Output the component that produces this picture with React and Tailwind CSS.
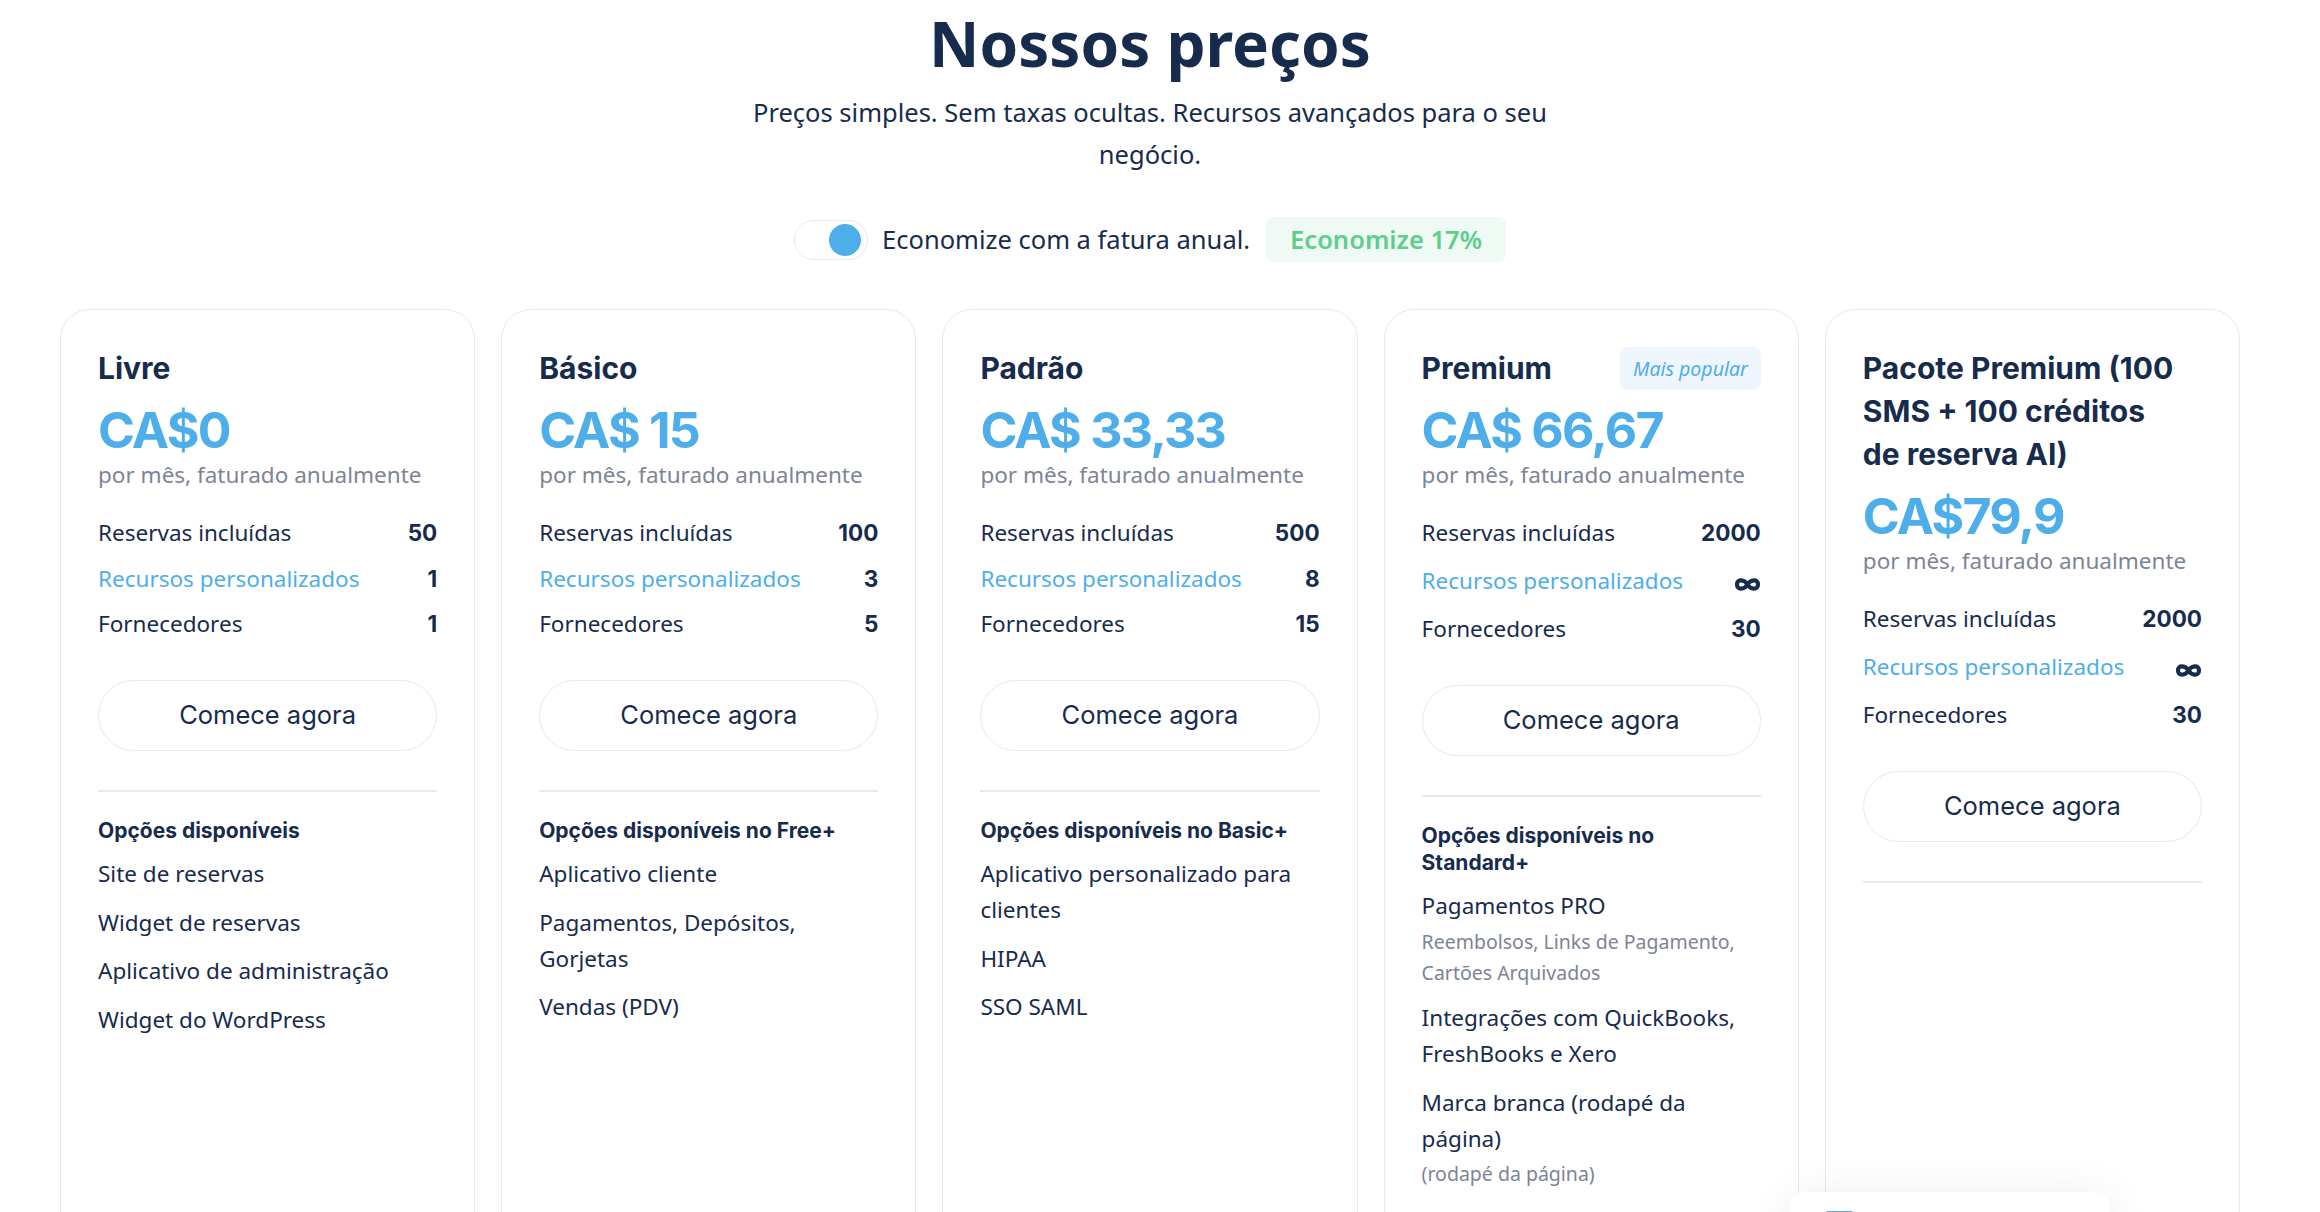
import React from "react";

const NAVY = "text-[#172b4d]";

function Infinity() {
  return (
    <svg width="27" height="17" viewBox="0 0 27 17" className="mt-[6px] block">
      <path
        d="M13.5 8.5 C10.5 3.5 3 2.5 3 8.5 C3 14.5 10.5 13.5 13.5 8.5 C16.5 3.5 24 2.5 24 8.5 C24 14.5 16.5 13.5 13.5 8.5 Z"
        fill="none"
        stroke="#172b4d"
        strokeWidth="4.2"
        strokeLinejoin="round"
      />
    </svg>
  );
}

function Row({ label, value, link }) {
  const inf = value === "inf";
  return (
    <div className={`flex items-center justify-between ${inf ? "h-[39px]" : "h-[34px]"}`}>
      <span
        className={`text-[22.5px] leading-[34px] ${link ? "text-[#4eaeea]" : NAVY}`}
      >
        {label}
      </span>
      {inf ? (
        <Infinity />
      ) : (
        <span className={`font-['Inter',sans-serif] text-[22.5px] font-bold leading-[34px] ${NAVY}`}>
          {value}
        </span>
      )}
    </div>
  );
}

function Card({ title, badge, price, rows, optTitle, options }) {
  return (
    <div className="flex h-[1000px] flex-col rounded-[30px] border-[1.5px] border-[#e6e9f4] bg-white px-[37px] pt-[37px]">
      <div className="flex items-center justify-between">
        <h3 className={`font-['Inter',sans-serif] text-[30px] font-bold leading-[43px] ${NAVY}`}>
          {title}
        </h3>
        {badge && (
          <span className="flex h-[43px] items-center rounded-[8px] bg-[#eff5fd] px-[13px] text-[19.5px] italic text-[#4eaeea]">
            {badge}
          </span>
        )}
      </div>
      <div className="mt-[12px] font-['Inter',sans-serif] text-[50px] font-bold leading-[56px] tracking-[-0.035em] text-[#4eaeea]">
        {price}
      </div>
      <div className="text-[22.5px] leading-[34px] text-[#7d8496]">por mês, faturado anualmente</div>
      <div className="mt-[24px] flex flex-col gap-[11.5px]">
        {rows.map((r, i) => (
          <Row key={i} label={r[0]} value={r[1]} link={i === 1} />
        ))}
      </div>
      <button className={`mt-[39px] flex h-[71px] w-full items-center justify-center rounded-full border-[1.5px] border-[#e6e9f4] bg-white font-['Inter',sans-serif] text-[25.5px] font-normal ${NAVY}`}>
        Comece agora
      </button>
      <div className="mt-[39px] h-[1.5px] bg-[#e6e9f4]" />
      {optTitle && (
        <div className="mt-[25px] flex flex-col gap-[12.5px]">
          <div className={`font-['Inter',sans-serif] text-[21px] font-bold leading-[27px] ${NAVY}`}>
            {optTitle}
          </div>
          {options.map((o, i) => (
            <div key={i} className="flex flex-col">
              <div className={`text-[22.5px] leading-[36px] ${NAVY}`}>{o.t}</div>
              {o.s && (
                <div className="mt-[1.5px] text-[19.5px] leading-[31px] text-[#7d8496]">{o.s}</div>
              )}
            </div>
          ))}
        </div>
      )}
    </div>
  );
}

const baseRows = (a, b, c) => [
  ["Reservas incluídas", a],
  ["Recursos personalizados", b],
  ["Fornecedores", c],
];

export default function App() {
  return (
    <div className="relative h-[1212px] w-[2320px] overflow-hidden bg-white font-['Noto_Sans',sans-serif]">
      <div className="pl-[60px] pr-[80px]">
        <header className="flex flex-col items-center">
          <h1 className={`mt-[6px] text-[62px] font-bold leading-[74px] ${NAVY}`}>Nossos preços</h1>
          <p className={`mt-[11px] text-center text-[25.5px] leading-[42px] ${NAVY}`}>
            Preços simples. Sem taxas ocultas. Recursos avançados para o seu
            <br />
            negócio.
          </p>
          <div className="mt-[42px] flex h-[45px] items-center">
            <div className="flex h-[40px] w-[74px] items-center justify-end rounded-full border-[1.5px] border-[#e6e8f5] bg-white pr-[6px]">
              <div className="h-[32px] w-[32px] rounded-full bg-[#4eaeea]" />
            </div>
            <span className={`ml-[14px] text-[25.5px] ${NAVY}`}>Economize com a fatura anual.</span>
            <span className="ml-[16px] flex h-[45px] items-center rounded-[8px] bg-[#eefaf3] px-[24px] text-[25.5px] font-semibold text-[#5ccf8c]">
              Economize 17%
            </span>
          </div>
        </header>

        <div className="mt-[47px] grid grid-cols-5 gap-[26px]">
          <Card
            title="Livre"
            price="CA$0"
            rows={baseRows("50", "1", "1")}
            optTitle="Opções disponíveis"
            options={[
              { t: "Site de reservas" },
              { t: "Widget de reservas" },
              { t: "Aplicativo de administração" },
              { t: "Widget do WordPress" },
            ]}
          />
          <Card
            title="Básico"
            price="CA$ 15"
            rows={baseRows("100", "3", "5")}
            optTitle="Opções disponíveis no Free+"
            options={[
              { t: "Aplicativo cliente" },
              { t: <>Pagamentos, Depósitos,<br />Gorjetas</> },
              { t: "Vendas (PDV)" },
            ]}
          />
          <Card
            title="Padrão"
            price="CA$ 33,33"
            rows={baseRows("500", "8", "15")}
            optTitle="Opções disponíveis no Basic+"
            options={[
              { t: <>Aplicativo personalizado para<br />clientes</> },
              { t: "HIPAA" },
              { t: "SSO SAML" },
            ]}
          />
          <Card
            title="Premium"
            badge="Mais popular"
            price="CA$ 66,67"
            rows={baseRows("2000", "inf", "30")}
            optTitle={<>Opções disponíveis no<br />Standard+</>}
            options={[
              { t: "Pagamentos PRO", s: <>Reembolsos, Links de Pagamento,<br />Cartões Arquivados</> },
              { t: <>Integrações com QuickBooks,<br />FreshBooks e Xero</> },
              { t: <>Marca branca (rodapé da<br />página)</>, s: "(rodapé da página)" },
            ]}
          />
          <Card
            title={<>Pacote Premium (100<br />SMS + 100 créditos<br />de reserva AI)</>}
            price="CA$79,9"
            rows={baseRows("2000", "inf", "30")}
          />
        </div>
      </div>

      <div className="absolute left-[1790px] top-[1192px] h-[100px] w-[320px] rounded-[15px] bg-white shadow-[0_0_40px_rgba(0,0,0,0.07)]">
        <div className="absolute left-[36px] top-[19px] h-[6px] w-[27px] rounded-[2px] bg-[#4eaeea]" />
      </div>
    </div>
  );
}
